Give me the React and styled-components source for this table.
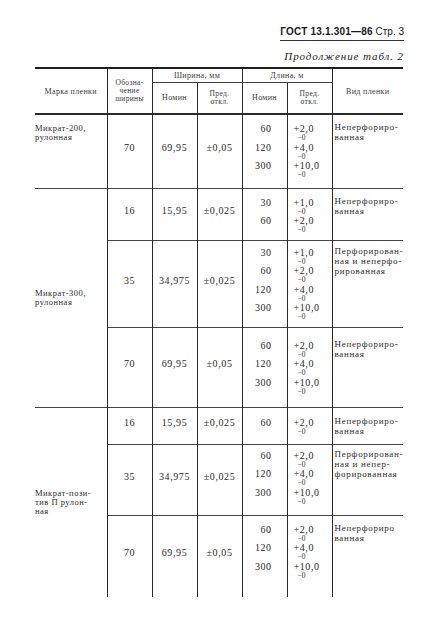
import React from 'react';
import styled, { createGlobalStyle, css } from 'styled-components';

const serif = css`
  font-family: "Liberation Serif", "Times New Roman", serif;
`;

const Global = createGlobalStyle`
  html, body { margin: 0; padding: 0; background: #fff; }
  body { font-family: "Liberation Serif", "Times New Roman", serif; color: #2b2b2b; }
`;

const Page = styled.div`
  ${serif}
  width: 427px;
  height: 633px;
  overflow: hidden;
  box-sizing: border-box;
  padding: 26px 23px 0 35px;
  display: flex;
  flex-direction: column;
  background: #fff;
`;

const RunningHead = styled.div`
  display: flex;
  justify-content: flex-end;
`;

const HeadText = styled.div`
  font-family: "Liberation Sans", Arial, sans-serif;
  font-size: 10px;
  line-height: 12px;
  padding-bottom: 2px;
  border-bottom: 1px solid #333;
  color: #1a1a1a;
  white-space: nowrap;
`;

const Std = styled.span`
  font-weight: bold;
  letter-spacing: 0.2px;
`;

const Continuation = styled.div`
  ${serif}
  align-self: flex-end;
  font-style: italic;
  font-size: 11px;
  line-height: 12px;
  letter-spacing: 0.9px;
  margin-top: 9px;
  color: #222;
`;

const Table = styled.table`
  ${serif}
  margin-top: 5px;
  width: 368px;
  border-collapse: collapse;
  table-layout: fixed;
  border-top: 2px solid #1e1e1e;
  color: #2b2b2b;
`;

const Tr = styled.tr`
  height: ${p => p.$h}px;
`;

const Th = styled.th`
  ${serif}
  font-weight: normal;
  font-size: ${p => p.$fs || 8}px;
  letter-spacing: 0.35px;
  line-height: ${p => p.$lh || 9}px;
  color: #3a3a3a;
  text-align: center;
  vertical-align: middle;
  padding: 0;
  border-left: ${p => (p.$first ? 'none' : '1px solid #2a2a2a')};
  border-bottom: ${p => (p.$sub ? '1px solid #444' : '2px solid #2a2a2a')};
`;

const Td = styled.td`
  ${serif}
  padding: 0;
  border-left: 1px solid #2a2a2a;
  border-top: ${p => (p.$noTop ? 'none' : '1px solid #444')};
  vertical-align: top;
  color: #2b2b2b;
`;

const LabelCell = styled(Td)`
  border-left: none;
  font-size: 8.5px;
  line-height: 9px;
  letter-spacing: 0.5px;
  vertical-align: ${p => p.$align};
  padding-top: ${p => p.$pt || 0}px;
`;

const NumCell = styled(Td)`
  text-align: center;
  vertical-align: middle;
  font-size: 10px;
  line-height: 12px;
  letter-spacing: 0.6px;
  padding-bottom: 6px;
`;

const LenCell = styled(Td)`
  text-align: right;
  padding-right: 15px;
  padding-top: ${p => p.$pt}px;
`;

const TolCell = styled(Td)`
  padding-left: 6px;
  padding-top: ${p => p.$pt}px;
`;

const KindCell = styled(Td)`
  padding-left: 2px;
  padding-top: ${p => p.$pt - 3}px;
  font-size: 9px;
  line-height: 10px;
  letter-spacing: 0.7px;
`;

const LenLine = styled.div`
  height: 18.5px;
  font-size: 10px;
  line-height: 10px;
  letter-spacing: 0.5px;
`;

const TolBlock = styled.div`
  height: 18.5px;
  display: flex;
  flex-direction: column;
`;

const Upper = styled.div`
  font-size: 10px;
  line-height: 10px;
  letter-spacing: 0.6px;
  white-space: nowrap;
`;

const Lower = styled.div`
  font-size: 7.5px;
  line-height: 8.5px;
  padding-left: 4px;
`;

const Lines = ({ items }) => items.map((t, i) => <div key={i}>{t}</div>);

const groups = [
  {
    label: ['Микрат-200,', 'рулонная'],
    align: 'top',
    rows: [
      { h: 74, pt: 9, w: '70', wn: '69,95', wt: '±0,05', lens: ['60', '120', '300'], tols: ['2,0', '4,0', '10,0'], kind: ['Неперфориро-', 'ванная'] },
    ],
  },
  {
    label: ['Микрат-300,', 'рулонная'],
    align: 'middle',
    rows: [
      { h: 52, pt: 9, w: '16', wn: '15,95', wt: '±0,025', lens: ['30', '60'], tols: ['1,0', '2,0'], kind: ['Неперфориро-', 'ванная'] },
      { h: 87, pt: 7, w: '35', wn: '34,975', wt: '±0,025', lens: ['30', '60', '120', '300'], tols: ['1,0', '2,0', '4,0', '10,0'], kind: ['Перфорирован-', 'ная и неперфо-', 'рированная'] },
      { h: 80, pt: 13, w: '70', wn: '69,95', wt: '±0,05', lens: ['60', '120', '300'], tols: ['2,0', '4,0', '10,0'], kind: ['Неперфориро-', 'ванная'] },
    ],
  },
  {
    label: ['Микрат-пози-', 'тив П рулон-', 'ная'],
    align: 'middle',
    rows: [
      { h: 37, pt: 10, w: '16', wn: '15,95', wt: '±0,025', lens: ['60'], tols: ['2,0'], kind: ['Неперфориро-', 'ванная'] },
      { h: 71, pt: 6, w: '35', wn: '34,975', wt: '±0,025', lens: ['60', '120', '300'], tols: ['2,0', '4,0', '10,0'], kind: ['Перфорирован-', 'ная и непер-', 'форированная'] },
      { h: 82, pt: 9, w: '70', wn: '69,95', wt: '±0,05', lens: ['60', '120', '300'], tols: ['2,0', '4,0', '10,0'], kind: ['Неперфориро', 'ванная'] },
    ],
  },
];

export default function App() {
  return (
    <Page>
      <Global />
      <RunningHead>
        <HeadText>
          <Std>ГОСТ 13.1.301—86</Std> Стр. 3
        </HeadText>
      </RunningHead>
      <Continuation>Продолжение табл. 2</Continuation>
      <Table>
        <colgroup>
          <col style={{ width: 72 }} />
          <col style={{ width: 45 }} />
          <col style={{ width: 45 }} />
          <col style={{ width: 45 }} />
          <col style={{ width: 45 }} />
          <col style={{ width: 45 }} />
          <col style={{ width: 71 }} />
        </colgroup>
        <thead>
          <Tr $h={14}>
            <Th rowSpan={2} $first>Марка пленки</Th>
            <Th rowSpan={2} $fs={7.5} $lh={8}>
              <Lines items={['Обозна-', 'чение', 'ширины']} />
            </Th>
            <Th colSpan={2} $sub>Ширина, мм</Th>
            <Th colSpan={2} $sub>Длина, м</Th>
            <Th rowSpan={2}>Вид пленки</Th>
          </Tr>
          <Tr $h={32}>
            <Th>Номин</Th>
            <Th $fs={7.5} $lh={8}>
              <Lines items={['Пред.', 'откл.']} />
            </Th>
            <Th>Номин</Th>
            <Th $fs={7.5} $lh={8}>
              <Lines items={['Пред.', 'откл.']} />
            </Th>
          </Tr>
        </thead>
        <tbody>
          {groups.map((g, gi) =>
            g.rows.map((r, ri) => (
              <Tr key={`${gi}-${ri}`} $h={r.h}>
                {ri === 0 && (
                  <LabelCell rowSpan={g.rows.length} $align={g.align} $pt={g.align === 'top' ? 9 : 0} $noTop={gi === 0}>
                    <Lines items={g.label} />
                  </LabelCell>
                )}
                <NumCell $noTop={gi === 0}>{r.w}</NumCell>
                <NumCell $noTop={gi === 0}>{r.wn}</NumCell>
                <NumCell $noTop={gi === 0}>{r.wt}</NumCell>
                <LenCell $pt={r.pt} $noTop={gi === 0}>
                  {r.lens.map((l, i) => (
                    <LenLine key={i}>{l}</LenLine>
                  ))}
                </LenCell>
                <TolCell $pt={r.pt} $noTop={gi === 0}>
                  {r.tols.map((t, i) => (
                    <TolBlock key={i}>
                      <Upper>+{t}</Upper>
                      <Lower>−0</Lower>
                    </TolBlock>
                  ))}
                </TolCell>
                <KindCell $pt={r.pt + 1} $noTop={gi === 0}>
                  <Lines items={r.kind} />
                </KindCell>
              </Tr>
            ))
          )}
        </tbody>
      </Table>
    </Page>
  );
}
